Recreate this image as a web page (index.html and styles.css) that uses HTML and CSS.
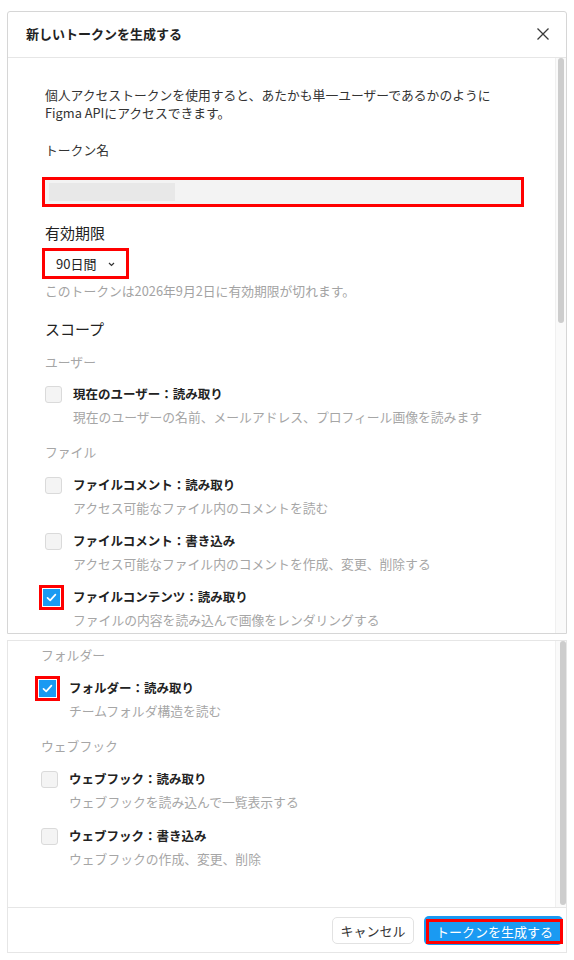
FILE: index.html
```html
<!DOCTYPE html>
<html lang="ja">
<head>
<meta charset="utf-8">
<title>新しいトークンを生成する</title>
<link rel="stylesheet" href="styles.css">
</head>
<body>
<div class="page">
  <section class="panel panel-top">
    <header class="dlg-header">
      <h1 class="dlg-title">新しいトークンを生成する</h1>
      <span class="close-btn">
        <svg width="12" height="12" viewBox="0 0 12 12"><path d="M0.5 0.5L11.5 11.5M11.5 0.5L0.5 11.5" stroke="#3a3a3a" stroke-width="1.3" fill="none"/></svg>
      </span>
    </header>
    <div class="dlg-body">
      <div class="scroll-content top-content">
        <p class="intro">個人アクセストークンを使用すると、あたかも単一ユーザーであるかのように<br>Figma APIにアクセスできます。</p>
        <div class="field-label">トークン名</div>
        <div class="text-input mark"><span class="redacted"></span></div>
        <div class="heading expiry-heading">有効期限</div>
        <div class="select mark">
          <span>90日間</span>
          <svg width="7" height="5" viewBox="0 0 7 5"><path d="M1 1L3.5 3.5L6 1" stroke="#333" stroke-width="1.2" fill="none"/></svg>
        </div>
        <div class="note">このトークンは2026年9月2日に有効期限が切れます。</div>
        <div class="heading scope-heading">スコープ</div>

        <div class="group-title first-group">ユーザー</div>
        <div class="item">
          <div class="item-row"><span class="cb"></span><span class="item-label">現在のユーザー：読み取り</span></div>
          <div class="item-desc">現在のユーザーの名前、メールアドレス、プロフィール画像を読みます</div>
        </div>

        <div class="group-title">ファイル</div>
        <div class="item">
          <div class="item-row"><span class="cb"></span><span class="item-label">ファイルコメント：読み取り</span></div>
          <div class="item-desc">アクセス可能なファイル内のコメントを読む</div>
        </div>
        <div class="item">
          <div class="item-row"><span class="cb"></span><span class="item-label">ファイルコメント：書き込み</span></div>
          <div class="item-desc">アクセス可能なファイル内のコメントを作成、変更、削除する</div>
        </div>
        <div class="item">
          <div class="item-row"><span class="cb checked mark-cb"><svg width="17" height="17" viewBox="0 0 17 17"><path d="M4.5 8.8L7.2 11.4L12.4 5.6" stroke="#fff" stroke-width="1.7" fill="none" stroke-linecap="round" stroke-linejoin="round"/></svg></span><span class="item-label">ファイルコンテンツ：読み取り</span></div>
          <div class="item-desc">ファイルの内容を読み込んで画像をレンダリングする</div>
        </div>
      </div>
      <div class="scrollbar"><div class="thumb thumb-top"></div></div>
    </div>
  </section>

  <section class="panel panel-bottom">
    <div class="dlg-body">
      <div class="scroll-content bottom-content">
        <div class="group-title first-group-b">フォルダー</div>
        <div class="item">
          <div class="item-row"><span class="cb checked mark-cb"><svg width="17" height="17" viewBox="0 0 17 17"><path d="M4.5 8.8L7.2 11.4L12.4 5.6" stroke="#fff" stroke-width="1.7" fill="none" stroke-linecap="round" stroke-linejoin="round"/></svg></span><span class="item-label">フォルダー：読み取り</span></div>
          <div class="item-desc">チームフォルダ構造を読む</div>
        </div>

        <div class="group-title">ウェブフック</div>
        <div class="item">
          <div class="item-row"><span class="cb"></span><span class="item-label">ウェブフック：読み取り</span></div>
          <div class="item-desc">ウェブフックを読み込んで一覧表示する</div>
        </div>
        <div class="item item-last">
          <div class="item-row"><span class="cb"></span><span class="item-label">ウェブフック：書き込み</span></div>
          <div class="item-desc">ウェブフックの作成、変更、削除</div>
        </div>
      </div>
      <div class="scrollbar"><div class="thumb thumb-bottom"></div></div>
    </div>
    <footer class="dlg-footer">
      <button class="btn btn-cancel">キャンセル</button>
      <button class="btn btn-primary">トークンを生成する</button>
    </footer>
  </section>
</div>
</body>
</html>
```
FILE: styles.css
```css
* { box-sizing: border-box; }
html, body { margin: 0; padding: 0; background: #fff; }
body {
  font-family: "Noto Sans CJK JP", "Noto Sans", sans-serif;
  color: #333;
  font-size: 13px;
}
.page { padding: 11px 0 0 7px; width: 567px; }

.panel {
  width: 560px;
  border: 1px solid #d6d6d6;
  display: flex;
  flex-direction: column;
  overflow: hidden;
  background: #fff;
}
.panel-top { height: 623px; border-radius: 3px 3px 0 0; }
.panel-bottom { height: 313px; margin-top: 6px; border-color: #e6e6e6; }

.dlg-header {
  height: 46px;
  flex: none;
  border-bottom: 1px solid #e6e6e6;
  display: flex;
  align-items: center;
  justify-content: space-between;
  padding: 0 17px 2px 18px;
}
.dlg-title { margin: 0; font-size: 13px; font-weight: 700; color: #222; }
.close-btn { display: flex; width: 12px; height: 12px; }

.dlg-body { flex: 1; display: flex; min-height: 0; }
.scroll-content { flex: 1; overflow: hidden; }
.top-content { padding: 28px 0 0 37px; }
.bottom-content { padding: 5px 0 0 33px; }

.scrollbar { width: 11px; flex: none; background: #fafafa; border-left: 1px solid #f0f0f0; }
.thumb { width: 6px; margin-left: 2px; background: #cdcdcd; border-radius: 3px; }
.thumb-top { height: 265px; }
.thumb-bottom { height: 264px; margin-left: 4px; }

.intro { margin: 0; line-height: 18px; font-size: 12.8px; color: #333; }
.field-label { margin-top: 19px; line-height: 18px; font-size: 12.8px; color: #333; }
.text-input {
  margin-top: 21px;
  width: 476px;
  height: 24px;
  background: #f3f3f3;
  padding: 3px 4px;
}
.redacted { display: block; width: 126px; height: 18px; background: #e8e8e8; }
.mark { outline: 3px solid #ff0000; }

.heading { font-size: 15px; line-height: 22px; color: #222; }
.expiry-heading { margin-top: 18px; }
.select {
  margin-top: 7px;
  width: 81px;
  height: 25px;
  display: flex;
  align-items: center;
  gap: 12px;
  padding-left: 11px;
  font-size: 13px;
  color: #222;
}
.select svg { margin-top: 1px; }
.note { margin-top: 7px; font-size: 12.8px; line-height: 16px; color: #a3a3a3; }
.scope-heading { margin-top: 19px; }

.group-title { margin-top: 17px; font-size: 12.8px; line-height: 18px; color: #a6a6a6; }
.first-group { margin-top: 13px; }
.first-group-b { margin-top: 0; }

.item { margin-top: 14px; }
.first-group + .item { margin-top: 13px; }
.item-last { margin-top: 15px; }
.item-row { display: flex; align-items: center; gap: 11px; height: 20px; }
.cb {
  width: 17px;
  height: 17px;
  flex: none;
  border: 1px solid #dadada;
  background: #f4f4f4;
  border-radius: 3px;
  display: flex;
}
.cb.checked { background: #1a9af2; border-color: #1a9af2; }
.cb.checked svg { margin: -1px; }
.mark-cb { border-radius: 0; outline: 3px solid #ff0000; outline-offset: 1px; margin-left: -2px; margin-right: 2px; }
.item-label { font-size: 12.5px; font-weight: 700; color: #222; line-height: 20px; }
.item-desc { margin-top: 4px; padding-left: 28px; font-size: 12.8px; line-height: 18px; color: #a6a6a6; }

.dlg-footer {
  height: 45px;
  flex: none;
  border-top: 1px solid #e6e6e6;
  display: flex;
  align-items: center;
  justify-content: flex-end;
  gap: 10px;
  padding-right: 3px;
}
.btn {
  font-family: "Noto Sans CJK JP", "Noto Sans", sans-serif;
  font-size: 13px;
  border-radius: 5px;
  cursor: pointer;
}
.btn-cancel {
  width: 82px;
  height: 27px;
  background: #fff;
  border: 1px solid #e2e2e2;
  color: #333;
  padding: 0;
}
.btn-primary {
  position: relative;
  width: 139px;
  height: 29px;
  background: #1a9af2;
  border: none;
  color: #fff;
  padding: 2px 0 0 2px;
}
.btn-primary::after {
  content: "";
  position: absolute;
  left: 2px;
  top: 3px;
  right: 0;
  bottom: 1px;
  border: 3px solid #ff0000;
}
```
